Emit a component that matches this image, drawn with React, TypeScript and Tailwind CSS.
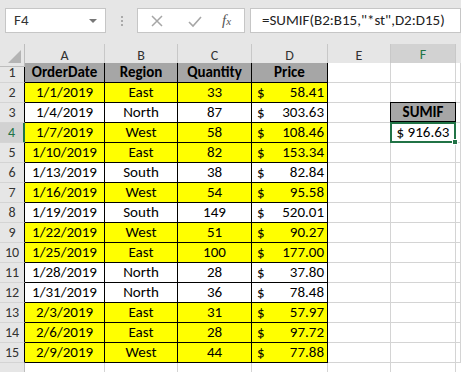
import React from 'react';

const font = { fontFamily: 'Carlito, Lato, "Liberation Sans", sans-serif' };

const rows: [string, string, number, string][] = [
  ['1/1/2019', 'East', 33, '58.41'],
  ['1/4/2019', 'North', 87, '303.63'],
  ['1/7/2019', 'West', 58, '108.46'],
  ['1/10/2019', 'East', 82, '153.34'],
  ['1/13/2019', 'South', 38, '82.84'],
  ['1/16/2019', 'West', 54, '95.58'],
  ['1/19/2019', 'South', 149, '520.01'],
  ['1/22/2019', 'West', 51, '90.27'],
  ['1/25/2019', 'East', 100, '177.00'],
  ['1/28/2019', 'North', 28, '37.80'],
  ['1/31/2019', 'North', 36, '78.48'],
  ['2/3/2019', 'East', 31, '57.97'],
  ['2/6/2019', 'East', 28, '97.72'],
  ['2/9/2019', 'West', 44, '77.88'],
];

const grid = 'grid grid-cols-[25px_80px_73px_74px_76px_63px_65px_1fr]';

function RowHead({ n, active }: { n: number; active?: boolean }) {
  return (
    <div
      className={`h-5 flex items-center justify-center border-b border-[#d4d4d4] text-[14px] ${
        active
          ? 'bg-[#d2d2d2] text-[#217346] border-r-2 border-r-[#217346]'
          : 'bg-[#e6e6e6] text-[#333] border-r border-r-black'
      }`}
    >
      {n}
    </div>
  );
}

function Blank() {
  return <div className="h-5 bg-white border-b border-r border-[#d4d4d4]" />;
}

export default function App() {
  return (
    <div className="w-[461px] h-[372px] overflow-hidden bg-[#e6e6e6] text-black" style={font}>
      {/* formula bar */}
      <div className="h-[44px] flex items-start pt-2 pl-[5px]">
        <div className="w-[101px] h-[25px] bg-white border border-[#c6c6c6] flex items-center justify-between pl-2 pr-2 text-[15px] text-[#333]">
          <span>F4</span>
          <span className="w-0 h-0 border-l-[4px] border-r-[4px] border-t-[4px] border-l-transparent border-r-transparent border-t-[#777]" />
        </div>
        <div className="w-[31px] h-[25px] flex flex-col items-center justify-center gap-[2px]">
          <span className="w-[2px] h-[2px] bg-[#aaa]" />
          <span className="w-[2px] h-[2px] bg-[#aaa]" />
          <span className="w-[2px] h-[2px] bg-[#aaa]" />
        </div>
        <div className="w-[108px] h-[25px] bg-white border border-[#c6c6c6] flex items-center">
          <svg width="14" height="14" viewBox="0 0 14 14" className="ml-[12px]">
            <path d="M2 2 L12 12 M12 2 L2 12" stroke="#a6a6a6" strokeWidth="1.5" />
          </svg>
          <svg width="14" height="14" viewBox="0 0 14 14" className="ml-[24px]">
            <path d="M1 8 L5 12 L13 3" stroke="#a6a6a6" strokeWidth="1.6" fill="none" />
          </svg>
          <span className="ml-[20px] italic text-[15px] text-[#555]" style={{ fontFamily: '"Liberation Serif", serif' }}>
            f<span className="text-[11px]">x</span>
          </span>
        </div>
        <div className="ml-[5px] flex-1 h-[25px] bg-white border border-[#c6c6c6] flex items-center pl-[11px] text-[15px] text-[#222] whitespace-nowrap">
          =SUMIF(B2:B15,"*st",D2:D15)
        </div>
      </div>

      {/* column headers */}
      <div className={`${grid} h-[19px] text-[14px] text-[#333]`}>
        <div className="relative border-r border-b border-[#bdbdbd] bg-[#e6e6e6]">
          <svg width="13" height="13" className="absolute right-[3px] bottom-[3px]">
            <polygon points="13,0 13,13 0,13" fill="#b4b4b4" />
          </svg>
        </div>
        {['A', 'B', 'C', 'D', 'E'].map((c, i) => (
          <div
            key={c}
            className={`flex items-center justify-center border-r border-[#c8c8c8] border-b ${i < 4 ? 'border-b-black' : 'border-b-[#d4d4d4]'}`}
          >
            {c}
          </div>
        ))}
        <div className="flex items-center justify-center bg-[#d2d2d2] border-r border-[#c8c8c8] border-b-2 border-b-[#217346] text-[#217346]">
          F
        </div>
        <div className="border-b border-[#d4d4d4]" />
      </div>

      {/* row 1 */}
      <div className={`${grid} text-[15px]`}>
        <RowHead n={1} />
        {['OrderDate', 'Region', 'Quantity', 'Price'].map((h) => (
          <div key={h} className="h-5 flex items-center justify-center bg-[#a6a6a6] font-bold border-r border-b border-black">
            {h}
          </div>
        ))}
        <Blank />
        <Blank />
        <Blank />
      </div>

      {rows.map((r, i) => {
        const n = i + 2;
        const yellow = r[1] === 'East' || r[1] === 'West';
        const bg = yellow ? 'bg-[#ffff00]' : 'bg-white';
        const cell = `h-5 flex items-center border-r border-b border-black ${bg}`;
        return (
          <div key={n} className={`${grid} text-[15px]`}>
            <RowHead n={n} active={n === 4} />
            <div className={`${cell} justify-center`}>{r[0]}</div>
            <div className={`${cell} justify-center`}>{r[1]}</div>
            <div className={`${cell} justify-center`}>{r[2]}</div>
            <div className={`${cell} justify-between pl-[5px] pr-[3px]`}>
              <span>$</span>
              <span>{r[3]}</span>
            </div>
            <Blank />
            {n === 3 ? (
              <div className="h-5 flex items-center justify-center bg-[#a6a6a6] font-bold border border-black -mt-px -ml-px">
                SUMIF
              </div>
            ) : n === 4 ? (
              <div className="relative h-5 flex items-center justify-center bg-white border-r border-b border-[#d4d4d4]">
                $ 916.63
                <span className="absolute -left-px -top-px -right-px -bottom-px border-2 border-[#217346]" />
                <span className="absolute -right-[3px] -bottom-[3px] w-[6px] h-[6px] bg-[#217346] border border-white" />
              </div>
            ) : (
              <Blank />
            )}
            <Blank />
          </div>
        );
      })}
      <div className={grid}>
        <div className="h-5 bg-[#e6e6e6] border-r border-[#bdbdbd]" />
        <div className="h-5 bg-white border-r border-[#d4d4d4]" />
        <div className="h-5 bg-white border-r border-[#d4d4d4]" />
        <div className="h-5 bg-white border-r border-[#d4d4d4]" />
        <div className="h-5 bg-white border-r border-[#d4d4d4]" />
        <div className="h-5 bg-white border-r border-[#d4d4d4]" />
        <div className="h-5 bg-white border-r border-[#d4d4d4]" />
        <div className="h-5 bg-white" />
      </div>
    </div>
  );
}
